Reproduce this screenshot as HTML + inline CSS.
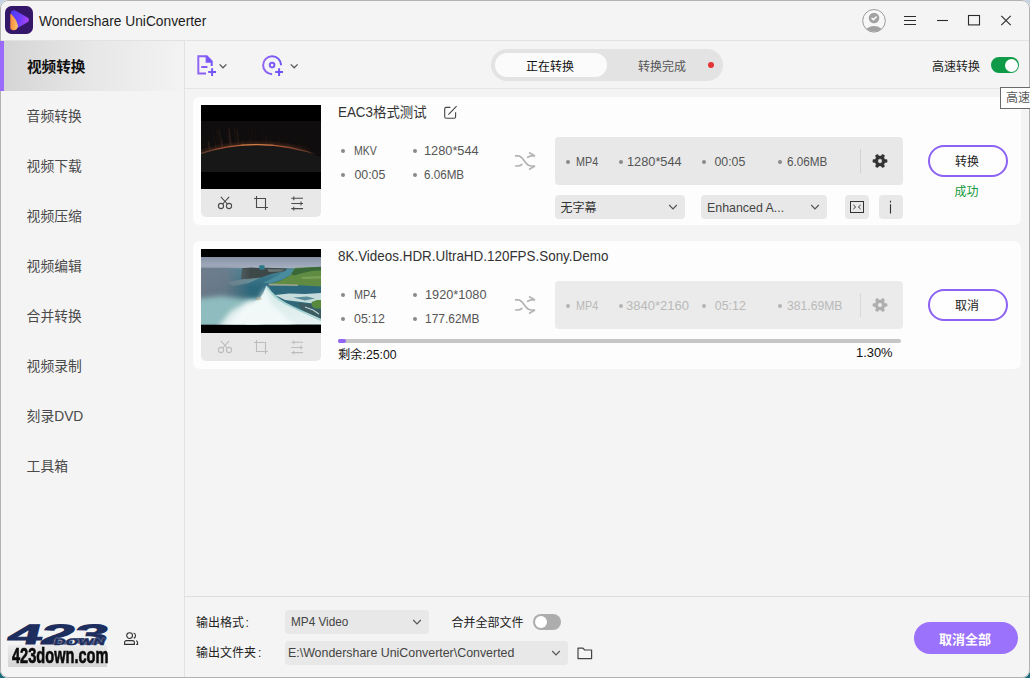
<!DOCTYPE html>
<html lang="zh-CN">
<head>
<meta charset="utf-8">
<title>Wondershare UniConverter</title>
<style>
*{box-sizing:border-box;margin:0;padding:0}
html,body{width:1030px;height:678px;overflow:hidden}
body{position:relative;background:linear-gradient(180deg,#c6d3e6 0,#c6d3e6 50%,#176a78 50%,#176a78 100%);font-family:"Liberation Sans","Noto Sans CJK SC",sans-serif;font-size:12px;color:#222}
.abs{position:absolute}
#win{position:absolute;left:0;top:0;width:1030px;height:678px;background:#f4f4f4;border-radius:8px;overflow:hidden}
#frame{left:0;top:0;width:1030px;height:678px;border:1px solid #b2b2b2;border-radius:8px;z-index:50}
#win>*{position:absolute}
.t{position:absolute;white-space:nowrap;line-height:1;transform:translateY(-50%) scaleX(var(--k,1));transform-origin:0 50%}
.cjk{font-family:"Liberation Sans","Noto Sans CJK SC",sans-serif}
/* title bar */
#tsep{left:0;top:40px;width:1030px;height:1px;background:#e2e2e2}
#vsep{left:184px;top:41px;width:1px;height:640px;background:#e2e2e2}
#tbsep{left:185px;top:88px;width:846px;height:1px;background:#e4e4e4}
#ftsep{left:185px;top:596px;width:846px;height:1px;background:#dedede}
/* sidebar */
#act{left:0;top:41px;width:184px;height:50px;background:linear-gradient(90deg,#d4d4d4 0,#e7e7e7 50%,#f3f3f3 100%)}
#actbar{left:0;top:41px;width:4px;height:50px;background:#9a6bfb;z-index:51}
.nav{font-size:13.8px;color:#4a4a4a;left:26.6px;margin-top:0.8px}
/* cards */
.card{left:193px;width:828px;height:128px;background:#fdfdfd;border-radius:7px}
.card>*{position:absolute}
.thumb{left:8px;top:8px;width:120px;height:84px;background:#000;overflow:hidden}
.strip{left:8px;top:92px;width:120px;height:28px;background:#e8e8e8;border-radius:0 0 5px 5px}
.panel{left:362px;top:40px;width:348px;height:48px;background:#e8e8e8;border-radius:4px}
.dd{background:#e8e8e8;border-radius:4px;height:24px}
.dot{position:absolute;width:4px;height:4px;border-radius:50%;background:#8a8a8a;transform:translate(-50%,-50%)}
.s{font-size:12.4px;color:#555}
.s.l{color:#b9b9b9}
.dot.l{background:#b4b4b4}
.pill{border:2px solid #8b62f3;border-radius:16px;background:#fefefe;width:80px;height:32px;left:735px}
</style>
</head>
<body>
<div id="win">
<div id="frame"></div>
<!-- TITLEBAR -->
<div id="tsep"></div>
<div id="vsep"></div>
<div id="tbsep"></div>
<div id="ftsep"></div>
<svg class="abs" style="left:5px;top:6px" width="28" height="28" viewBox="0 0 28 28">
<defs><linearGradient id="lg1" x1="0" y1="0" x2="1" y2="0.3"><stop offset="0" stop-color="#4b3cf5"/><stop offset="0.55" stop-color="#6a3df8"/><stop offset="1" stop-color="#a544fb"/></linearGradient>
<linearGradient id="lg2" x1="0" y1="0" x2="1" y2="0"><stop offset="0" stop-color="#fb8a3c"/><stop offset="1" stop-color="#f8c468"/></linearGradient></defs>
<rect x="0" y="0" width="28" height="28" rx="6.5" fill="#35176a"/>
<path d="M5.9 7.4 Q5.9 4 9.4 4.3 Q10.4 4.5 22.9 11.7 Q25.2 13.9 22.8 16 L12.6 22 L6 9.4 Z" fill="url(#lg1)"/>
<path d="M5.3 8.6 Q5.3 7.6 6 8 Q11.6 13.4 12.9 19.4 Q13 23.4 9.2 24.3 Q5.5 24.6 5.3 21.6 Z" fill="url(#lg2)"/>
</svg>
<div class="t" id="title" style="--k:0.918;left:39px;top:20px;font-size:15px;color:#1c1c1c">Wondershare UniConverter</div>
<svg class="abs" style="left:860px;top:6px" width="160" height="30" viewBox="0 0 160 30" fill="none">
<circle cx="14" cy="14.8" r="11.3" stroke="#9b9b9b" stroke-width="1" fill="#f7f7f7"/>
<clipPath id="ucp"><circle cx="14" cy="14.8" r="10.8"/></clipPath>
<g clip-path="url(#ucp)"><ellipse cx="14" cy="27.4" rx="9.6" ry="7.4" fill="#a2a2a2"/></g>
<circle cx="14" cy="12" r="5.3" fill="#a2a2a2"/>
<path d="M11.6 12 L13.4 13.8 L16.6 10.4" stroke="#fff" stroke-width="1.4"/>
<g stroke="#2b2b2b" stroke-width="1.1">
<path d="M44 10.5H56M44 14.5H56M44 18.5H56"/>
<path d="M77 14.5H88"/>
<rect x="108.5" y="9.5" width="11" height="9.4"/>
<path d="M141.3 9.8L150.7 19.2M150.7 9.8L141.3 19.2"/>
</g></svg>
<!-- SIDEBAR -->
<div id="act"></div><div id="actbar"></div>
<div class="t" style="left:27px;top:66.6px;font-size:14.6px;font-weight:bold;color:#111">视频转换</div>
<div class="t nav" style="top:116px">音频转换</div>
<div class="t nav" style="top:166px">视频下载</div>
<div class="t nav" style="top:216px">视频压缩</div>
<div class="t nav" style="top:266px">视频编辑</div>
<div class="t nav" style="top:316px">合并转换</div>
<div class="t nav" style="top:366px">视频录制</div>
<div class="t nav" style="top:416px">刻录DVD</div>
<div class="t nav" style="top:466px">工具箱</div>
<div class="abs" style="left:8px;top:645px;width:99px;height:22px;background:linear-gradient(180deg,#ececec,#d4d4d4)"></div>
<div class="abs" id="wm1" style="left:5px;top:622px;font-family:'Liberation Sans',sans-serif;font-weight:bold;font-size:28px;line-height:26px;color:#1d2e5e;transform-origin:0 100%;transform:skewX(-14deg) scaleX(2.2);letter-spacing:-0.6px;white-space:nowrap;-webkit-text-stroke:0.9px #1d2e5e">423</div>
<div class="abs" id="wm2" style="left:53px;top:636.5px;font-family:'Liberation Sans',sans-serif;font-weight:bold;font-size:9.4px;line-height:9px;color:#1d2e5e;transform-origin:0 100%;transform:skewX(-14deg) scaleX(1.72);white-space:nowrap;-webkit-text-stroke:0.5px #1d2e5e;text-shadow:0 0 1px #f4f4f4,0 0 1px #f4f4f4">DOWN</div>
<div class="abs" id="wm3" style="left:11.5px;top:644px;font-family:'Liberation Sans',sans-serif;font-weight:bold;font-size:22.8px;line-height:22px;color:#0a0a0a;transform-origin:0 0;transform:scaleX(0.64);white-space:nowrap;-webkit-text-stroke:0.7px #0a0a0a">423down.com</div>
<svg class="abs" style="left:122px;top:630px" width="18" height="18" viewBox="0 0 18 18" fill="none" stroke="#333" stroke-width="1.1"><circle cx="7.6" cy="5.6" r="2.9"/><path d="M2.6 14.4V12.6Q2.6 10.6 4.6 10.6H10.4Q12.4 10.6 12.4 12.6V14.4Z"/><path d="M11.6 2.9A2.9 2.9 0 0 1 11.8 8.3M14 10.8Q15.6 11 15.6 12.8V14.4H14.2"/></svg>
<!-- TOOLBAR -->
<svg class="abs" style="left:195px;top:52px" width="110" height="28" viewBox="0 0 110 28" fill="none">
<defs><linearGradient id="pg1" x1="2" y1="0" x2="22" y2="0" gradientUnits="userSpaceOnUse"><stop offset="0" stop-color="#9467f6"/><stop offset="1" stop-color="#6a4ff7"/></linearGradient>
<linearGradient id="pg2" x1="67" y1="0" x2="88" y2="0" gradientUnits="userSpaceOnUse"><stop offset="0" stop-color="#9467f6"/><stop offset="1" stop-color="#6a4ff7"/></linearGradient></defs>
<g stroke="url(#pg1)" stroke-width="2" stroke-linejoin="miter">
<path d="M16.7 14V9.4L11.8 4.2H3.3V21.6H11"/>
<path d="M11.6 4.4V9.8H16.6" />
<path d="M6.2 15H12.4"/>
<path d="M17.1 16.2V24M13.2 20.1H21"/>
</g>
<path d="M11.8 4.2L16.7 9.4H11.8Z" fill="#7a56f6"/>
<path d="M24.6 12.4L28 15.8L31.4 12.4" stroke="#5a5a5a" stroke-width="1.3"/>
<g stroke="url(#pg2)" stroke-width="2">
<path d="M86.1 13.2A9 9 0 1 0 77.1 22.2"/>
<circle cx="77.1" cy="13.1" r="2.3"/>
<path d="M84.1 16.2V24M80.2 20.1H88"/>
</g>
<path d="M95.8 12.4L99.2 15.8L102.6 12.4" stroke="#5a5a5a" stroke-width="1.3"/>
</svg>
<div class="abs" style="left:491px;top:49px;width:232px;height:32px;border-radius:16px;background:#e3e3e3"></div>
<div class="abs" style="left:495px;top:53px;width:112px;height:24px;border-radius:12px;background:#fbfbfb"></div>
<div class="t" style="left:526px;top:66.5px;font-size:12px;color:#111">正在转换</div>
<div class="t" style="left:638px;top:66.5px;font-size:12px;color:#555">转换完成</div>
<div class="abs" style="left:708px;top:62px;width:6px;height:6px;border-radius:50%;background:#e43434"></div>
<div class="t" style="left:932px;top:66.5px;font-size:12px;color:#222">高速转换</div>
<div class="abs" style="left:991px;top:57px;width:28px;height:16px;border-radius:8px;background:#0f9a48"></div>
<div class="abs" style="left:1005px;top:58.5px;width:13px;height:13px;border-radius:50%;background:#fff"></div>
<div class="abs" style="left:1000px;top:87px;width:40px;height:22px;background:#fff;border:1px solid #6a6a6a;z-index:60"></div>
<div class="t" style="left:1006px;top:98px;font-size:12px;color:#575757;z-index:61">高速转换</div>
<!-- CARD1 -->
<div class="card" id="c1" style="top:97px">
<div class="thumb"><svg width="120" height="84" viewBox="0 0 120 84">
<defs><filter id="b1" x="-20%" y="-50%" width="140%" height="200%"><feGaussianBlur stdDeviation="0.5"/></filter>
<filter id="b2" x="-20%" y="-50%" width="140%" height="200%"><feGaussianBlur stdDeviation="1.4"/></filter>
<filter id="b3" x="-20%" y="-50%" width="140%" height="200%"><feGaussianBlur stdDeviation="0.6 1.5"/></filter>
<linearGradient id="lm" x1="0" y1="0" x2="120" y2="0" gradientUnits="userSpaceOnUse"><stop offset="0" stop-color="#7a5a48" stop-opacity="0.7"/><stop offset="0.18" stop-color="#b0583a"/><stop offset="0.45" stop-color="#d87c44"/><stop offset="0.7" stop-color="#b0583a"/><stop offset="0.88" stop-color="#7a4630" stop-opacity="0.8"/><stop offset="0.96" stop-color="#7a4630" stop-opacity="0"/></linearGradient>
<linearGradient id="mk" x1="0" y1="0" x2="120" y2="0" gradientUnits="userSpaceOnUse"><stop offset="0" stop-color="#fff"/><stop offset="0.8" stop-color="#fff"/><stop offset="0.95" stop-color="#000"/></linearGradient>
<mask id="mm" maskUnits="userSpaceOnUse" x="0" y="0" width="120" height="84"><rect width="120" height="84" fill="url(#mk)"/></mask>
<clipPath id="cp1"><rect x="0" y="16" width="120" height="51"/></clipPath></defs>
<rect width="120" height="84" fill="#000"/>
<g clip-path="url(#cp1)"><rect x="0" y="16" width="120" height="51" fill="#0f0d0d"/>
<g mask="url(#mm)"><g filter="url(#b3)" opacity="0.75"><path d="M64.8 40.2L65.2 31.3" stroke="#6e4632" stroke-width="1.7" opacity="0.15"/><path d="M76.9 41.2L78.0 30.8" stroke="#6e4632" stroke-width="1.3" opacity="0.05"/><path d="M98.1 44.9L99.8 36.8" stroke="#6e4632" stroke-width="0.9" opacity="0.17"/><path d="M48.8 40.1L48.5 31.4" stroke="#6e4632" stroke-width="1.4" opacity="0.12"/><path d="M1.4 48.3L-0.9 40.0" stroke="#6e4632" stroke-width="1.7" opacity="0.14"/><path d="M79.6 41.5L80.1 37.5" stroke="#6e4632" stroke-width="0.9" opacity="0.15"/><path d="M64.2 40.2L64.4 36.4" stroke="#6e4632" stroke-width="1.7" opacity="0.05"/><path d="M21.8 43.2L20.4 35.0" stroke="#6e4632" stroke-width="1.7" opacity="0.30"/><path d="M30.1 41.8L27.6 22.4" stroke="#6e4632" stroke-width="1.5" opacity="0.20"/><path d="M21.3 43.3L18.0 24.2" stroke="#6e4632" stroke-width="1.8" opacity="0.23"/><path d="M92.9 43.7L93.9 38.5" stroke="#6e4632" stroke-width="1.0" opacity="0.10"/><path d="M15.2 44.6L13.9 38.6" stroke="#6e4632" stroke-width="1.4" opacity="0.15"/><path d="M0.4 48.6L-3.9 33.4" stroke="#6e4632" stroke-width="1.1" opacity="0.15"/><path d="M85.1 42.3L86.1 35.6" stroke="#6e4632" stroke-width="1.3" opacity="0.09"/><path d="M73.3 40.8L73.6 37.6" stroke="#6e4632" stroke-width="0.8" opacity="0.18"/><path d="M78.0 41.3L79.0 31.6" stroke="#6e4632" stroke-width="1.6" opacity="0.05"/><path d="M38.1 40.9L36.9 27.2" stroke="#6e4632" stroke-width="0.8" opacity="0.08"/><path d="M18.8 43.8L15.2 24.5" stroke="#6e4632" stroke-width="1.6" opacity="0.12"/><path d="M96.7 44.6L98.8 34.0" stroke="#6e4632" stroke-width="1.2" opacity="0.09"/><path d="M54.6 40.0L54.4 23.4" stroke="#6e4632" stroke-width="1.5" opacity="0.06"/><path d="M82.9 42.0L84.2 32.1" stroke="#6e4632" stroke-width="1.7" opacity="0.05"/><path d="M9.5 46.0L7.1 35.9" stroke="#6e4632" stroke-width="1.7" opacity="0.21"/><path d="M35.4 41.2L33.4 22.3" stroke="#6e4632" stroke-width="1.1" opacity="0.20"/><path d="M32.9 41.4L32.1 33.8" stroke="#6e4632" stroke-width="0.9" opacity="0.10"/><path d="M71.7 40.7L72.5 29.7" stroke="#6e4632" stroke-width="0.8" opacity="0.07"/><path d="M102.6 46.0L104.3 38.9" stroke="#6e4632" stroke-width="1.0" opacity="0.10"/><path d="M61.8 40.1L62.3 22.7" stroke="#6e4632" stroke-width="1.2" opacity="0.11"/><path d="M5.8 47.0L1.1 28.2" stroke="#6e4632" stroke-width="1.3" opacity="0.09"/><path d="M87.2 42.7L87.8 38.8" stroke="#6e4632" stroke-width="1.7" opacity="0.14"/><path d="M65.6 40.2L66.0 31.0" stroke="#6e4632" stroke-width="1.2" opacity="0.06"/><path d="M15.5 44.5L11.9 26.8" stroke="#6e4632" stroke-width="1.3" opacity="0.14"/><path d="M103.9 46.4L106.3 36.6" stroke="#6e4632" stroke-width="1.3" opacity="0.18"/><path d="M50.8 40.1L50.4 24.1" stroke="#6e4632" stroke-width="1.1" opacity="0.11"/><path d="M42.0 40.5L41.5 33.3" stroke="#6e4632" stroke-width="1.8" opacity="0.16"/><path d="M99.8 45.3L101.6 37.4" stroke="#6e4632" stroke-width="1.1" opacity="0.11"/><path d="M9.3 46.0L7.1 36.9" stroke="#6e4632" stroke-width="1.7" opacity="0.25"/><path d="M37.6 40.9L36.0 24.1" stroke="#6e4632" stroke-width="1.5" opacity="0.25"/><path d="M69.1 40.5L69.6 31.4" stroke="#6e4632" stroke-width="1.5" opacity="0.10"/><path d="M29.2 42.0L27.6 29.7" stroke="#6e4632" stroke-width="1.5" opacity="0.25"/><path d="M30.6 41.8L28.1 22.6" stroke="#6e4632" stroke-width="1.4" opacity="0.22"/></g>
<circle cx="56" cy="222.8" r="184" fill="none" stroke="#5e3420" stroke-width="3.4" opacity="0.55" filter="url(#b2)"/></g>
<circle cx="56" cy="224.4" r="184" fill="#171717"/>
<circle cx="56" cy="223.7" r="184" fill="none" stroke="url(#lm)" stroke-width="1.2" opacity="0.9" filter="url(#b1)"/>
<path d="M40 40.1Q56 38.6 72 40.1" stroke="#f0a458" stroke-width="0.6" fill="none" filter="url(#b1)" opacity="0.6"/>
</g></svg></div>
<div class="strip"></div>
<svg class="abs" style="left:8px;top:92px" width="120" height="28" viewBox="0 0 120 28" fill="none" stroke="#4a4a4a" stroke-width="1.1">
<circle cx="20" cy="17" r="2.6"/><circle cx="28" cy="17" r="2.6"/><path d="M19.8 7.8L26.4 15M28.2 7.8L21.6 15"/>
<path d="M55.5 7V18.5H67M53 9.5H64.5V21"/>
<path d="M90.3 9.3H102M90.3 14.5H102M90.3 19.6H102M92.8 7.4V11.2M100 12.6V16.4M92.8 17.7V21.5"/>
</svg>
<div class="t" style="--k:0.957;left:144.6px;top:15px;font-size:14px;color:#333">EAC3格式测试</div>
<svg class="abs" style="left:250px;top:8px" width="16" height="16" viewBox="0 0 16 16" fill="none" stroke="#444" stroke-width="1.1"><path d="M7.4 2.4H3.2Q1.7 2.4 1.7 3.9V11.8Q1.7 13.3 3.2 13.3H11.1Q12.6 13.3 12.6 11.8V7.2"/><path d="M5.4 9.6L13.6 1.2"/></svg>
<i class="dot" style="left:150px;top:53.5px"></i><div class="t s" style="--k:0.85;left:161px;top:54px">MKV</div>
<i class="dot" style="left:150px;top:77.5px"></i><div class="t s" style="left:161.4px;top:78px">00:05</div>
<i class="dot" style="left:222px;top:53.5px"></i><div class="t s" style="--k:1.03;left:231.4px;top:54px">1280*544</div>
<i class="dot" style="left:222px;top:77.5px"></i><div class="t s" style="--k:0.94;left:231.4px;top:78px">6.06MB</div>
<svg class="abs" style="left:307px;top:43px" width="40" height="40" viewBox="0 0 40 40" fill="none" stroke="#b4b4b4" stroke-width="1.7">
<path d="M15 15.9H18C24 15.9 24.5 26 31 26H35"/><path d="M27 17.6Q29.5 15.9 32 15.9H35"/><path d="M29 12.4L35 15.9"/>
<path d="M15 26H17Q20 26 22.4 24.2"/><path d="M29 29.5L35 26"/></svg>
<div class="panel"></div>
<i class="dot" style="left:374.6px;top:64.5px"></i><div class="t s" style="--k:0.87;left:383px;top:65px">MP4</div>
<i class="dot" style="left:427.7px;top:64.5px"></i><div class="t s" style="--k:1.03;left:434.4px;top:65px">1280*544</div>
<i class="dot" style="left:510.8px;top:64.5px"></i><div class="t s" style="left:521.4px;top:65px">00:05</div>
<i class="dot" style="left:586.6px;top:64.5px"></i><div class="t s" style="--k:0.945;left:594px;top:65px">6.06MB</div>
<div class="abs" style="left:667px;top:52px;width:1px;height:24px;background:#d2d2d2"></div>
<svg class="abs" style="left:677px;top:54px" width="20" height="20" viewBox="-10 -10 20 20"><path d="M4.68 -1.76L7.10 -1.22L7.10 1.22L4.68 1.76L3.87 3.17L4.60 5.54L2.49 6.75L0.81 4.93L-0.81 4.93L-2.49 6.75L-4.60 5.54L-3.87 3.17L-4.68 1.76L-7.10 1.22L-7.10 -1.22L-4.68 -1.76L-3.87 -3.17L-4.60 -5.54L-2.49 -6.75L-0.81 -4.93L0.81 -4.93L2.49 -6.75L4.60 -5.54L3.87 -3.17Z M2.2 0A2.2 2.2 0 1 0 -2.2 0A2.2 2.2 0 1 0 2.2 0Z" fill="#333" fill-rule="evenodd" stroke="#333" stroke-width="0.4" stroke-linejoin="round"/></svg>
<div class="dd" style="left:362px;top:98px;width:130px"></div>
<div class="t" style="left:367.5px;top:110.5px;font-size:12px;color:#333">无字幕</div>
<svg class="abs" style="left:475px;top:106px" width="10" height="8" viewBox="0 0 10 8" fill="none" stroke="#555" stroke-width="1.2"><path d="M1.2 2L5 5.8L8.8 2"/></svg>
<div class="dd" style="left:508px;top:98px;width:126px"></div>
<div class="t" style="left:514px;top:110.5px;font-size:12.4px;color:#444">Enhanced A...</div>
<svg class="abs" style="left:617px;top:106px" width="10" height="8" viewBox="0 0 10 8" fill="none" stroke="#555" stroke-width="1.2"><path d="M1.2 2L5 5.8L8.8 2"/></svg>
<div class="dd" style="left:652px;top:98px;width:24px"></div>
<svg class="abs" style="left:652px;top:98px" width="24" height="24" viewBox="0 0 24 24" fill="none" stroke="#333" stroke-width="1"><rect x="5.5" y="6.5" width="13" height="11"/><path d="M8.4 10L10.6 12L8.4 14M15.6 10L13.4 12L15.6 14"/></svg>
<div class="dd" style="left:686px;top:98px;width:24px"></div>
<svg class="abs" style="left:686px;top:98px" width="24" height="24" viewBox="0 0 24 24" fill="none" stroke="#333" stroke-width="1.1"><path d="M11.5 5.8V7.4M11.5 9.2V18.4"/></svg>
<div class="abs pill" style="top:48px"></div>
<div class="t" style="left:762px;top:65px;font-size:12px;color:#222">转换</div>
<div class="t" style="left:761.5px;top:95px;font-size:12px;color:#159a3c">成功</div>
</div>
<!-- CARD2 -->
<div class="card" id="c2" style="top:241px">
<div class="thumb"><svg width="120" height="84" viewBox="0 0 120 84">
<defs><filter id="f1" x="-30%" y="-30%" width="160%" height="160%"><feGaussianBlur stdDeviation="0.7"/></filter>
<filter id="f2" x="-30%" y="-30%" width="160%" height="160%"><feGaussianBlur stdDeviation="2.4"/></filter>
<filter id="f3" x="-30%" y="-30%" width="160%" height="160%"><feGaussianBlur stdDeviation="0.45"/></filter>
<filter id="f4" x="-30%" y="-30%" width="160%" height="160%"><feGaussianBlur stdDeviation="1.3"/></filter>
<linearGradient id="sky" x1="0" y1="0" x2="0" y2="1"><stop offset="0" stop-color="#8892a6"/><stop offset="1" stop-color="#a6b0c0"/></linearGradient>
<linearGradient id="wat" x1="0" y1="0" x2="0" y2="1"><stop offset="0.15" stop-color="#4a8698"/><stop offset="0.45" stop-color="#2c687c"/><stop offset="0.7" stop-color="#30687a"/></linearGradient>
<linearGradient id="mist" x1="0" y1="0" x2="0" y2="1"><stop offset="0" stop-color="#727c8c"/><stop offset="0.5" stop-color="#6c7a88"/><stop offset="1" stop-color="#80aaae"/></linearGradient>
<linearGradient id="mfade" x1="0" y1="0" x2="1" y2="0"><stop offset="0" stop-color="#fff"/><stop offset="0.55" stop-color="#fff" stop-opacity="0.85"/><stop offset="1" stop-color="#fff" stop-opacity="0"/></linearGradient>
<mask id="mmask" maskUnits="userSpaceOnUse" x="-5" y="0" width="60" height="70"><rect x="-5" y="0" width="55" height="70" fill="url(#mfade)"/></mask>
<linearGradient id="fall" x1="0" y1="0" x2="0" y2="1"><stop offset="0" stop-color="#cfe8e6"/><stop offset="1" stop-color="#e9f3f3"/></linearGradient>
<clipPath id="cp2"><rect x="0" y="0" width="120" height="67.5"/></clipPath></defs>
<rect width="120" height="84" fill="#000"/>
<g transform="translate(0,8)" clip-path="url(#cp2)">
<rect x="0" y="0" width="120" height="67.5" fill="url(#wat)"/>
<rect x="0" y="0" width="120" height="11.2" fill="url(#sky)"/>
<g filter="url(#f1)">
<path d="M41 11.2L50 10.6L58 11L66 10.8L86 11.4L84 14L70 17L60 20.5L48 22.5L40 22Z" fill="#3d4a4a"/>
<path d="M66 12L84 12.4L80 14.5L68 15Z" fill="#6a7472"/>
<path d="M26 25L44 22L60 20.5L48 26L32 29Z" fill="#8fa2a4" opacity="0.55"/>
<path d="M88 13.6L96 10.8L120 9.8V29.4L98 28.2L68 27.4L80 23.6L90 18Z" fill="#5f8c42"/>
<path d="M94 11.4L120 9.8V13.4L112 13.8L100 16.5L93 18.5L90 17Z" fill="#3a6838"/>
<path d="M67.5 26.6L97 27.4V29L68 28.4Z" fill="#98a48c"/>
<path d="M100 20L120 19V21.4L102 22Z" fill="#7aa058"/>
<path d="M86 13L93 12.4L90 17L82 22L70 26L62 26L74 20Z" fill="#4a8c9e"/>
</g>
<rect x="58.2" y="8.2" width="5.4" height="4.6" rx="1" fill="#2f7888" filter="url(#f3)"/>
<g mask="url(#mmask)"><rect x="-5" y="10.6" width="55" height="60" fill="url(#mist)" filter="url(#f4)"/></g>
<g filter="url(#f1)">
<path d="M74 38L88 36.4L104 37L120 36V47L108 46L96 44.6L84 43Z" fill="#c6dcdc"/>
<path d="M92 40.4L106 39.6L114 41.4L104 43.4Z" fill="#5c8e9a"/>
<path d="M110.6 45L116 43L120 43V51.6L114 51.4L111 49Z" fill="#58883a"/>
<path d="M97 46L110 47L112 52L120 52.6V64L108 58L100 52Z" fill="#3c5c62"/>
<path d="M104 50L112 53L118 57" stroke="#b8d0d0" stroke-width="1.2" fill="none"/>
</g>
<path d="M-4 42L20 39L44 42L54 42L60 70H-4Z" fill="#8fbcbe" filter="url(#f2)"/><path d="M14 74L30 54L48 44L58 44L60 74Z" fill="#e4f0f0" filter="url(#f2)"/>
<g filter="url(#f1)">
<path d="M65.3 28.4Q63 36 58.4 42L54 44L50 52L44 70H124V64Q108 56 99 54Q84 46 76 40Q69 34 65.3 28.4Z" fill="url(#fall)"/>
<path d="M66 30Q72 40 84 46.4Q100 54 122 64" stroke="#a4d2d0" stroke-width="2" fill="none" opacity="0.9"/>
<path d="M55 40.6L60 40L60.6 42.6L56.4 43.6Z" fill="#8a8a70"/>
</g>
<path d="M24 72L44 50L58 42L65 30L70 46L84 60L96 72Z" fill="#f6fbfb" opacity="0.8" filter="url(#f2)"/>
</g></svg></div>
<div class="strip"></div>
<svg class="abs" style="left:8px;top:92px" width="120" height="28" viewBox="0 0 120 28" fill="none" stroke="#bcbcbc" stroke-width="1.1">
<circle cx="20" cy="17" r="2.6"/><circle cx="28" cy="17" r="2.6"/><path d="M19.8 7.8L26.4 15M28.2 7.8L21.6 15"/>
<path d="M55.5 7V18.5H67M53 9.5H64.5V21"/>
<path d="M90.3 9.3H102M90.3 14.5H102M90.3 19.6H102M92.8 7.4V11.2M100 12.6V16.4M92.8 17.7V21.5"/>
</svg>
<div class="t" style="--k:0.92;left:144.5px;top:14.8px;font-size:14.6px;color:#333" id="t2">8K.Videos.HDR.UltraHD.120FPS.Sony.Demo</div>
<i class="dot" style="left:150px;top:53.5px"></i><div class="t s" style="--k:0.87;left:160.8px;top:54px">MP4</div>
<i class="dot" style="left:150px;top:77.5px"></i><div class="t s" style="left:161px;top:78px">05:12</div>
<i class="dot" style="left:221.6px;top:53.5px"></i><div class="t s" style="--k:1.025;left:231.6px;top:54px">1920*1080</div>
<i class="dot" style="left:221.6px;top:77.5px"></i><div class="t s" style="--k:0.965;left:231.6px;top:78px">177.62MB</div>
<svg class="abs" style="left:307px;top:43px" width="40" height="40" viewBox="0 0 40 40" fill="none" stroke="#b4b4b4" stroke-width="1.7">
<path d="M15 15.9H18C24 15.9 24.5 26 31 26H35"/><path d="M27 17.6Q29.5 15.9 32 15.9H35"/><path d="M29 12.4L35 15.9"/>
<path d="M15 26H17Q20 26 22.4 24.2"/><path d="M29 29.5L35 26"/></svg>
<div class="panel" style="background:#ebebeb"></div>
<i class="dot l" style="left:374.6px;top:64.5px"></i><div class="t s l" style="--k:0.87;left:382.6px;top:65px">MP4</div>
<i class="dot l" style="left:428px;top:64.5px"></i><div class="t s l" style="--k:1.05;left:433.4px;top:65px">3840*2160</div>
<i class="dot l" style="left:511px;top:64.5px"></i><div class="t s l" style="left:521.8px;top:65px">05:12</div>
<i class="dot l" style="left:587px;top:64.5px"></i><div class="t s l" style="--k:0.98;left:594.2px;top:65px">381.69MB</div>
<div class="abs" style="left:667px;top:52px;width:1px;height:24px;background:#d8d8d8"></div>
<svg class="abs" style="left:677px;top:54px" width="20" height="20" viewBox="-10 -10 20 20"><path d="M4.68 -1.76L7.10 -1.22L7.10 1.22L4.68 1.76L3.87 3.17L4.60 5.54L2.49 6.75L0.81 4.93L-0.81 4.93L-2.49 6.75L-4.60 5.54L-3.87 3.17L-4.68 1.76L-7.10 1.22L-7.10 -1.22L-4.68 -1.76L-3.87 -3.17L-4.60 -5.54L-2.49 -6.75L-0.81 -4.93L0.81 -4.93L2.49 -6.75L4.60 -5.54L3.87 -3.17Z M2.2 0A2.2 2.2 0 1 0 -2.2 0A2.2 2.2 0 1 0 2.2 0Z" fill="#aeaeae" fill-rule="evenodd" stroke="#aeaeae" stroke-width="0.4" stroke-linejoin="round"/></svg>
<div class="abs" style="left:145px;top:98px;width:563px;height:4px;border-radius:2px;background:#c6c6c6"></div>
<div class="abs" style="left:145px;top:98px;width:8px;height:4px;border-radius:2px;background:#8f66f6"></div>
<div class="t" style="--k:1.02;left:145px;top:114px;font-size:12px;color:#111">剩余:25:00</div>
<div class="t" style="--k:1.04;left:663px;top:112px;font-size:12.4px;color:#111">1.30%</div>
<div class="abs pill" style="top:48px"></div>
<div class="t" style="left:762px;top:65px;font-size:12px;color:#222">取消</div>
</div>
<!-- FOOTER -->
<div class="t" style="left:196px;top:622.5px;font-size:12px;color:#222">输出格式<span style="margin-left:1.5px">:</span></div>
<div class="abs dd" style="left:285px;top:610px;width:144px"></div>
<div class="t" style="--k:0.95;left:291.2px;top:622px;font-size:12.4px;color:#444">MP4 Video</div>
<svg class="abs" style="left:411.5px;top:618px" width="10" height="8" viewBox="0 0 10 8" fill="none" stroke="#555" stroke-width="1.2"><path d="M1.2 2L5 5.8L8.8 2"/></svg>
<div class="t" style="left:451.5px;top:622.5px;font-size:12px;color:#222">合并全部文件</div>
<div class="abs" style="left:533px;top:614px;width:28px;height:16px;border-radius:8px;background:#adadad"></div>
<div class="abs" style="left:535px;top:616px;width:12px;height:12px;border-radius:50%;background:#fff"></div>
<div class="t" style="left:196px;top:653px;font-size:12px;color:#222">输出文件夹<span style="margin-left:2px">:</span></div>
<div class="abs dd" style="left:285px;top:641px;width:283px"></div>
<div class="t" style="left:288px;top:653px;font-size:12.4px;color:#444">E:\Wondershare UniConverter\Converted</div>
<svg class="abs" style="left:551px;top:649px" width="10" height="8" viewBox="0 0 10 8" fill="none" stroke="#555" stroke-width="1.2"><path d="M1.2 2L5 5.8L8.8 2"/></svg>
<svg class="abs" style="left:576px;top:645px" width="18" height="16" viewBox="0 0 18 16" fill="none" stroke="#444" stroke-width="1.2" stroke-linejoin="round"><path d="M2 3.2H7L8.6 5H15.6V13.6H2Z"/></svg>
<div class="abs" style="left:914px;top:622px;width:104px;height:32px;border-radius:16px;background:#9b72fc"></div>
<div class="t" style="left:939px;top:639px;font-size:13px;font-weight:bold;color:#fff">取消全部</div>
</div>
</body>
</html>
